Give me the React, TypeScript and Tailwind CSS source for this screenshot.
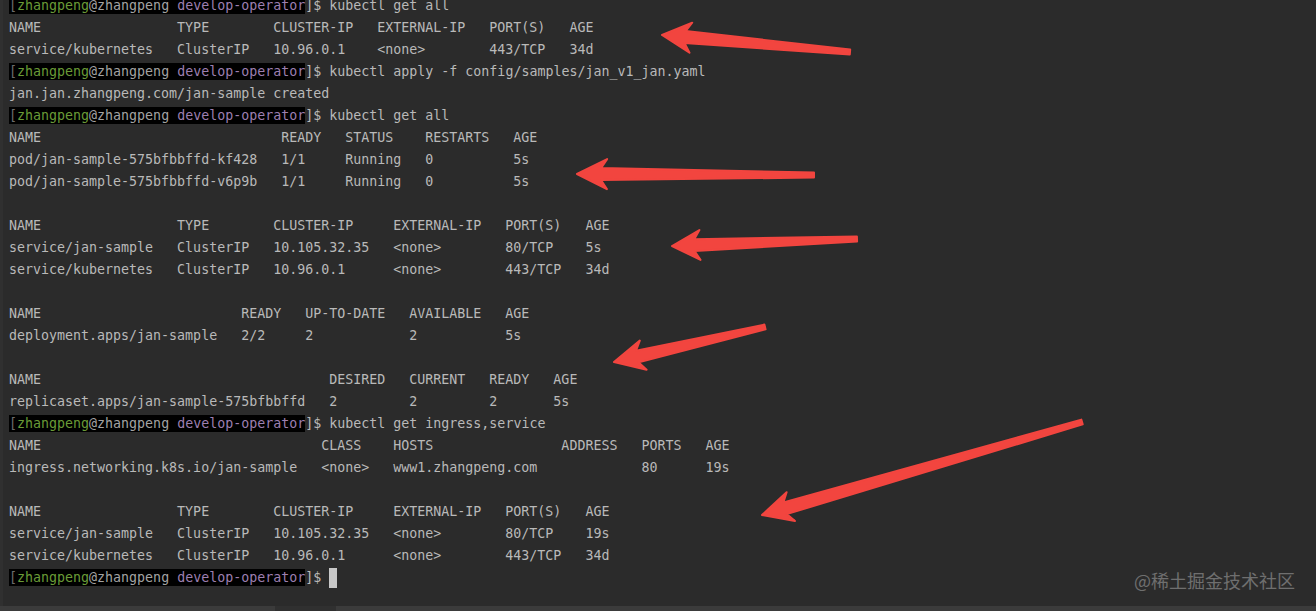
import React from "react";

type Line = { prompt?: boolean; text: string; cursor?: boolean };

const lines: Line[] = [
  { prompt: true, text: "$ kubectl get all" },
  { text: "NAME                 TYPE        CLUSTER-IP   EXTERNAL-IP   PORT(S)   AGE" },
  { text: "service/kubernetes   ClusterIP   10.96.0.1    <none>        443/TCP   34d" },
  { prompt: true, text: "$ kubectl apply -f config/samples/jan_v1_jan.yaml" },
  { text: "jan.jan.zhangpeng.com/jan-sample created" },
  { prompt: true, text: "$ kubectl get all" },
  { text: "NAME                              READY   STATUS    RESTARTS   AGE" },
  { text: "pod/jan-sample-575bfbbffd-kf428   1/1     Running   0          5s" },
  { text: "pod/jan-sample-575bfbbffd-v6p9b   1/1     Running   0          5s" },
  { text: "" },
  { text: "NAME                 TYPE        CLUSTER-IP     EXTERNAL-IP   PORT(S)   AGE" },
  { text: "service/jan-sample   ClusterIP   10.105.32.35   <none>        80/TCP    5s" },
  { text: "service/kubernetes   ClusterIP   10.96.0.1      <none>        443/TCP   34d" },
  { text: "" },
  { text: "NAME                         READY   UP-TO-DATE   AVAILABLE   AGE" },
  { text: "deployment.apps/jan-sample   2/2     2            2           5s" },
  { text: "" },
  { text: "NAME                                    DESIRED   CURRENT   READY   AGE" },
  { text: "replicaset.apps/jan-sample-575bfbbffd   2         2         2       5s" },
  { prompt: true, text: "$ kubectl get ingress,service" },
  { text: "NAME                                   CLASS    HOSTS                ADDRESS   PORTS   AGE" },
  { text: "ingress.networking.k8s.io/jan-sample   <none>   www1.zhangpeng.com             80      19s" },
  { text: "" },
  { text: "NAME                 TYPE        CLUSTER-IP     EXTERNAL-IP   PORT(S)   AGE" },
  { text: "service/jan-sample   ClusterIP   10.105.32.35   <none>        80/TCP    19s" },
  { text: "service/kubernetes   ClusterIP   10.96.0.1      <none>        443/TCP   34d" },
  { prompt: true, text: "$ ", cursor: true },
];

const Prompt = () => (
  <>
    <span className="bg-black py-[1px]">
      <span className="text-[#6b6b6b]">[</span>
      <span className="text-[#6a9b37]">zhangpeng</span>
      <span className="text-[#a3a3a3]">@zhangpeng </span>
      <span className="text-[#9d7fb0]">develop-operator</span>
    </span>
    <span>]</span>
  </>
);

type Arrow = { tip: [number, number]; tail: [number, number]; head: number; half: number };

const arrows: Arrow[] = [
  { tip: [662, 35], tail: [850, 52], head: 29, half: 15 },
  { tip: [577, 174], tail: [814, 175], head: 30, half: 15 },
  { tip: [672, 246], tail: [857, 239], head: 28, half: 15 },
  { tip: [614, 362], tail: [765, 327], head: 30, half: 15 },
  { tip: [762, 515], tail: [1082, 422], head: 30, half: 15 },
];

function arrowPoints(a: Arrow) {
  const [tx, ty] = a.tip;
  const [ex, ey] = a.tail;
  const len = Math.hypot(ex - tx, ey - ty);
  const ux = (ex - tx) / len;
  const uy = (ey - ty) / len;
  const nx = -uy;
  const ny = ux;
  const p = (d: number, o: number) => `${(tx + ux * d + nx * o).toFixed(1)},${(ty + uy * d + ny * o).toFixed(1)}`;
  return [
    p(0, 0),
    p(a.head, a.half),
    p(a.head * 0.8, 6),
    p(len, 2.5),
    p(len, -2.5),
    p(a.head * 0.8, -6),
    p(a.head, -a.half),
  ].join(" ");
}

export default function App() {
  return (
    <div className="relative flex h-[611px] w-[1316px] flex-col overflow-hidden bg-[#2b2b2b]">
      <div className="flex flex-1 border-l-[3px] border-[#303030]">
        <div className="mt-[-5px] pl-[6px] font-['DejaVu_Sans_Mono',monospace] text-[13.3px] leading-[22px] text-[#b9b9b9] whitespace-pre">
          {lines.map((l, i) => (
            <div key={i} className="h-[22px]">
              {l.prompt && <Prompt />}
              {l.text}
              {l.cursor && <span className="inline-block h-[20px] w-[8px] translate-y-[1px] align-top bg-[#c8c8c8]" />}
            </div>
          ))}
        </div>
      </div>
      <div className="flex h-[5px] bg-[#3b3b3b]">
        <div className="w-[275px]" />
        <div className="w-[61px] bg-[#303030]" />
      </div>

      <svg className="pointer-events-none absolute inset-0" width="1316" height="611">
        {arrows.map((a, i) => (
          <polygon
            key={i}
            points={arrowPoints(a)}
            fill="#f2453f"
            stroke="#f2453f"
            strokeWidth="2"
            strokeLinejoin="round"
          />
        ))}
      </svg>

      <div className="absolute bottom-[19px] right-[21px] font-['Noto_Sans_CJK_SC',sans-serif] text-[18px] leading-[24px] text-[#6f6f6f]">
        @稀土掘金技术社区
      </div>
    </div>
  );
}
